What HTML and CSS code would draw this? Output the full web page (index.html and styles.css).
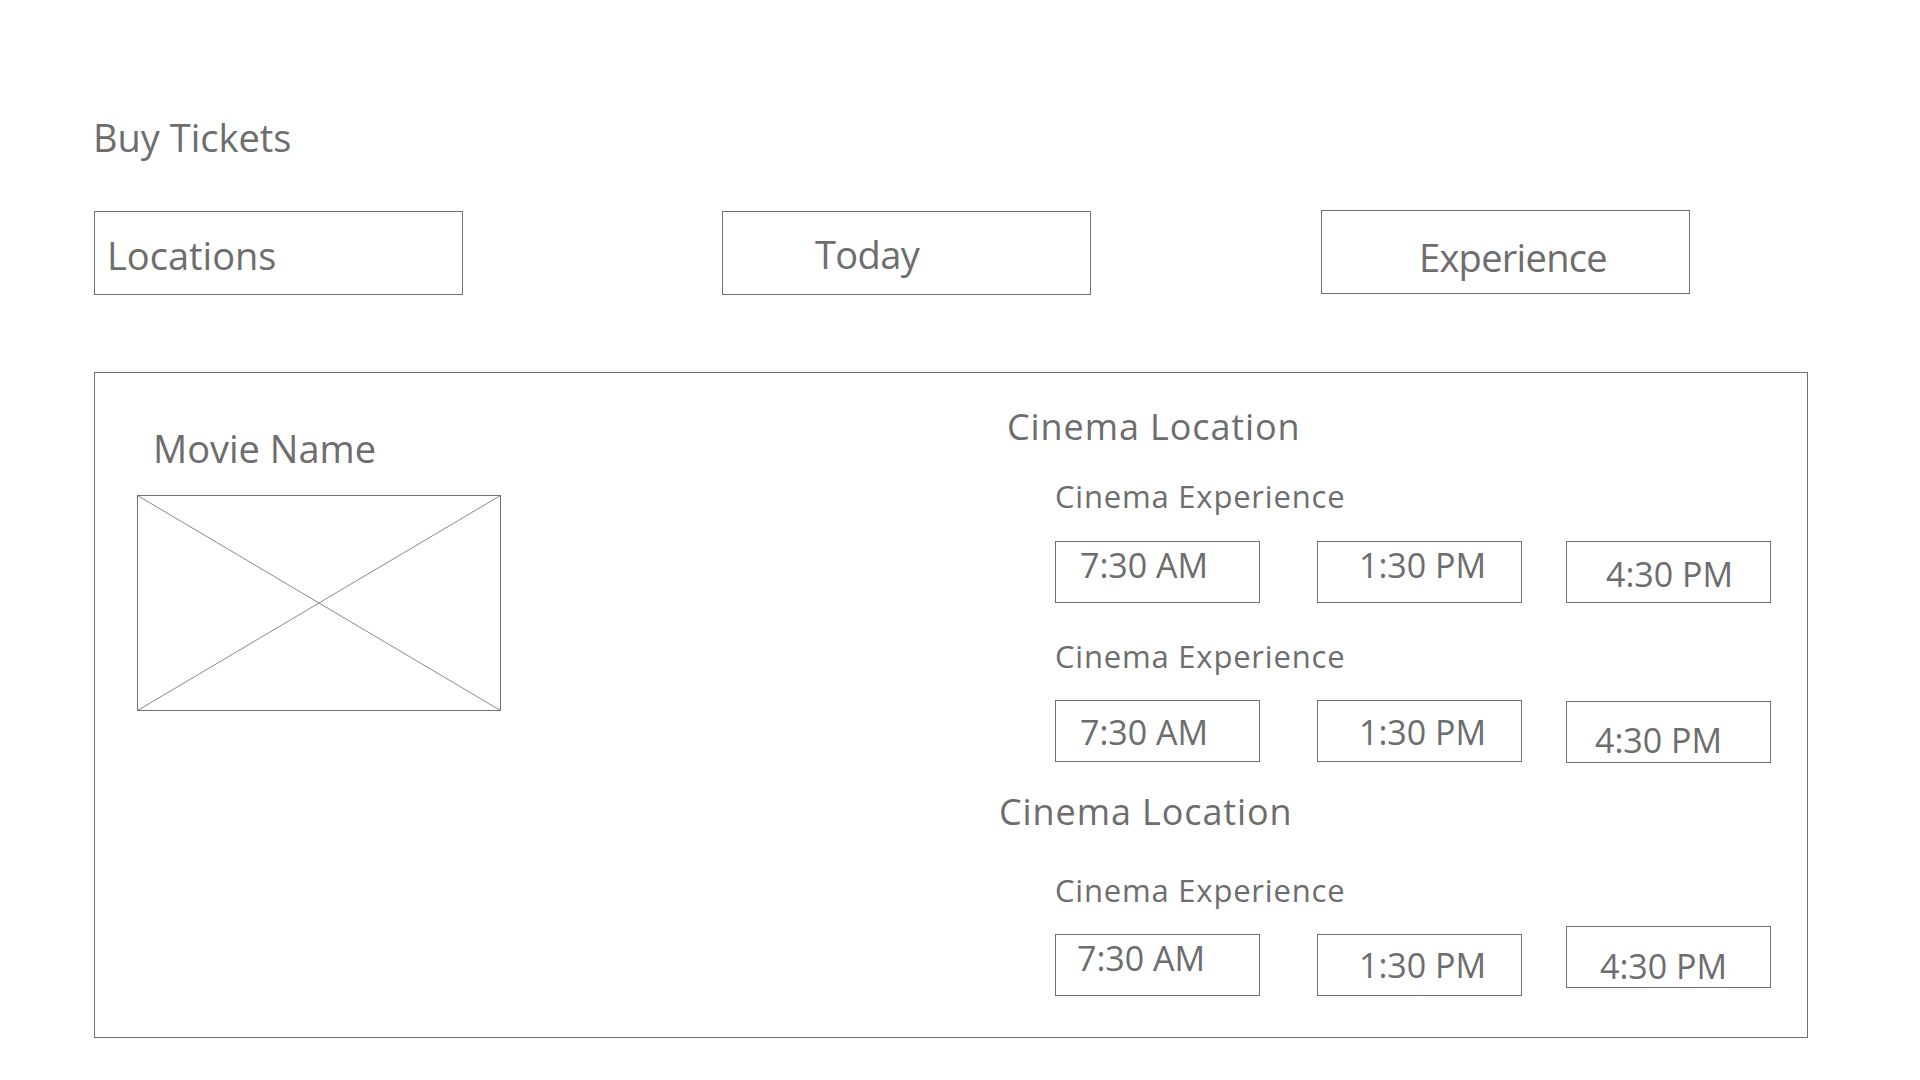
FILE: index.html
```html
<!DOCTYPE html>
<html lang="en">
<head>
<meta charset="utf-8">
<title>Buy Tickets</title>
<link rel="stylesheet" href="styles.css">
</head>
<body>
<div class="page">
  <h1 class="title">Buy Tickets</h1>

  <div class="filters">
    <div class="filter filter--locations">Locations</div>
    <div class="filter filter--today">Today</div>
    <div class="filter filter--experience">Experience</div>
  </div>

  <div class="panel">
    <div class="movie">
      <div class="movie-name">Movie Name</div>
      <svg class="poster" width="364" height="216" viewBox="0 0 364 216" aria-hidden="true">
        <line x1="0.5" y1="0.5" x2="363.5" y2="215.5" class="poster-x"/>
        <line x1="363.5" y1="0.5" x2="0.5" y2="215.5" class="poster-x"/>
        <rect x="0.5" y="0.5" width="363" height="215" class="poster-frame"/>
      </svg>
    </div>

    <div class="showtimes">
      <div class="location location--first">Cinema Location</div>
      <div class="experience experience--first">Cinema Experience</div>
      <div class="slots slots--r1">
        <div class="slot">7:30 AM</div>
        <div class="slot">1:30 PM</div>
        <div class="slot">4:30 PM</div>
      </div>
      <div class="experience experience--second">Cinema Experience</div>
      <div class="slots slots--r2">
        <div class="slot">7:30 AM</div>
        <div class="slot">1:30 PM</div>
        <div class="slot">4:30 PM</div>
      </div>

      <div class="location location--second">Cinema Location</div>
      <div class="experience experience--third">Cinema Experience</div>
      <div class="slots slots--r3">
        <div class="slot">7:30 AM</div>
        <div class="slot">1:30 PM</div>
        <div class="slot">4:30 PM</div>
      </div>
    </div>
  </div>
</div>
</body>
</html>
```

FILE: styles.css
```css
* {
  box-sizing: border-box;
}

html, body {
  margin: 0;
  padding: 0;
  background: #ffffff;
}

body {
  font-family: "Open Sans", "Noto Sans", "Liberation Sans", sans-serif;
  color: #6d6d6d;
  width: 1920px;
  height: 1080px;
  overflow: hidden;
}

.page {
  padding: 118px 0 0 94px;
}

.title {
  margin: 0;
  font-weight: 400;
  font-size: 38px;
  line-height: 38px;
  height: 38px;
  margin-left: -1px;
}

/* ---------- filter row ---------- */
.filters {
  display: flex;
  align-items: flex-start;
  margin-top: 55px;
}

.filter {
  width: 369px;
  height: 84px;
  border: 1px solid #707070;
  font-size: 38px;
  line-height: 38px;
  white-space: nowrap;
}

.filter--locations {
  padding: 24px 0 0 12px;
}

.filter--today {
  margin-left: 259px;
  padding: 23px 0 0 92px;
  letter-spacing: -0.6px;
}

.filter--experience {
  margin-left: 230px;
  margin-top: -1px;
  padding: 27px 0 0 97px;
  letter-spacing: -0.7px;
}

/* ---------- main panel ---------- */
.panel {
  margin-top: 77px;
  width: 1714px;
  height: 666px;
  border: 1px solid #707070;
  display: grid;
  grid-template-columns: 912px 1fr;
  align-items: start;
}

.movie {
  padding-left: 42px;
}

.movie-name {
  margin: 56px 0 0 16px;
  font-size: 38px;
  line-height: 38px;
}

.poster {
  display: block;
  margin-top: 28px;
}

.poster-frame {
  fill: none;
  stroke: #707070;
  stroke-width: 1;
}

.poster-x {
  stroke: #8a8a8a;
  stroke-width: 1;
}

/* ---------- showtimes ---------- */
.showtimes {
  display: flex;
  flex-direction: column;
  align-items: flex-start;
}

.location {
  font-size: 36px;
  line-height: 36px;
  letter-spacing: 0.9px;
  white-space: nowrap;
}

.location--first {
  margin-top: 36px;
}

.location--second {
  margin-top: 31px;
  margin-left: -8px;
}

.experience {
  margin-left: 48px;
  font-size: 31px;
  line-height: 31px;
  letter-spacing: 0.8px;
  white-space: nowrap;
}

.experience--first {
  margin-top: 36px;
}

.experience--second {
  margin-top: 38px;
}

.experience--third {
  margin-top: 45px;
}

.slots {
  display: flex;
  align-items: flex-start;
  margin: 28px 0 0 48px;
}

.slots--r1 {
  margin-top: 29px;
}

.slot {
  width: 205px;
  height: 62px;
  border: 1px solid #707070;
  font-size: 34px;
  line-height: 34px;
  white-space: nowrap;
}

.slot:nth-child(2) {
  margin-left: 57px;
}

.slot:nth-child(3) {
  margin-left: 44px;
}

/* text placement inside each time box, row by row */
.slots--r1 .slot:nth-child(1) { padding: 6px 0 0 24px; }
.slots--r1 .slot:nth-child(2) { padding: 6px 0 0 41px; }
.slots--r1 .slot:nth-child(3) { padding: 15px 0 0 39px; }

.slots--r2 .slot:nth-child(1) { padding: 14px 0 0 24px; }
.slots--r2 .slot:nth-child(2) { padding: 14px 0 0 41px; }
.slots--r2 .slot:nth-child(3) { padding: 21px 0 0 28px; margin-top: 1px; }

.slots--r3 .slot:nth-child(1) { padding: 6px 0 0 21px; }
.slots--r3 .slot:nth-child(2) { padding: 13px 0 0 41px; }
.slots--r3 .slot:nth-child(3) { padding: 22px 0 0 33px; margin-top: -8px; }
```
